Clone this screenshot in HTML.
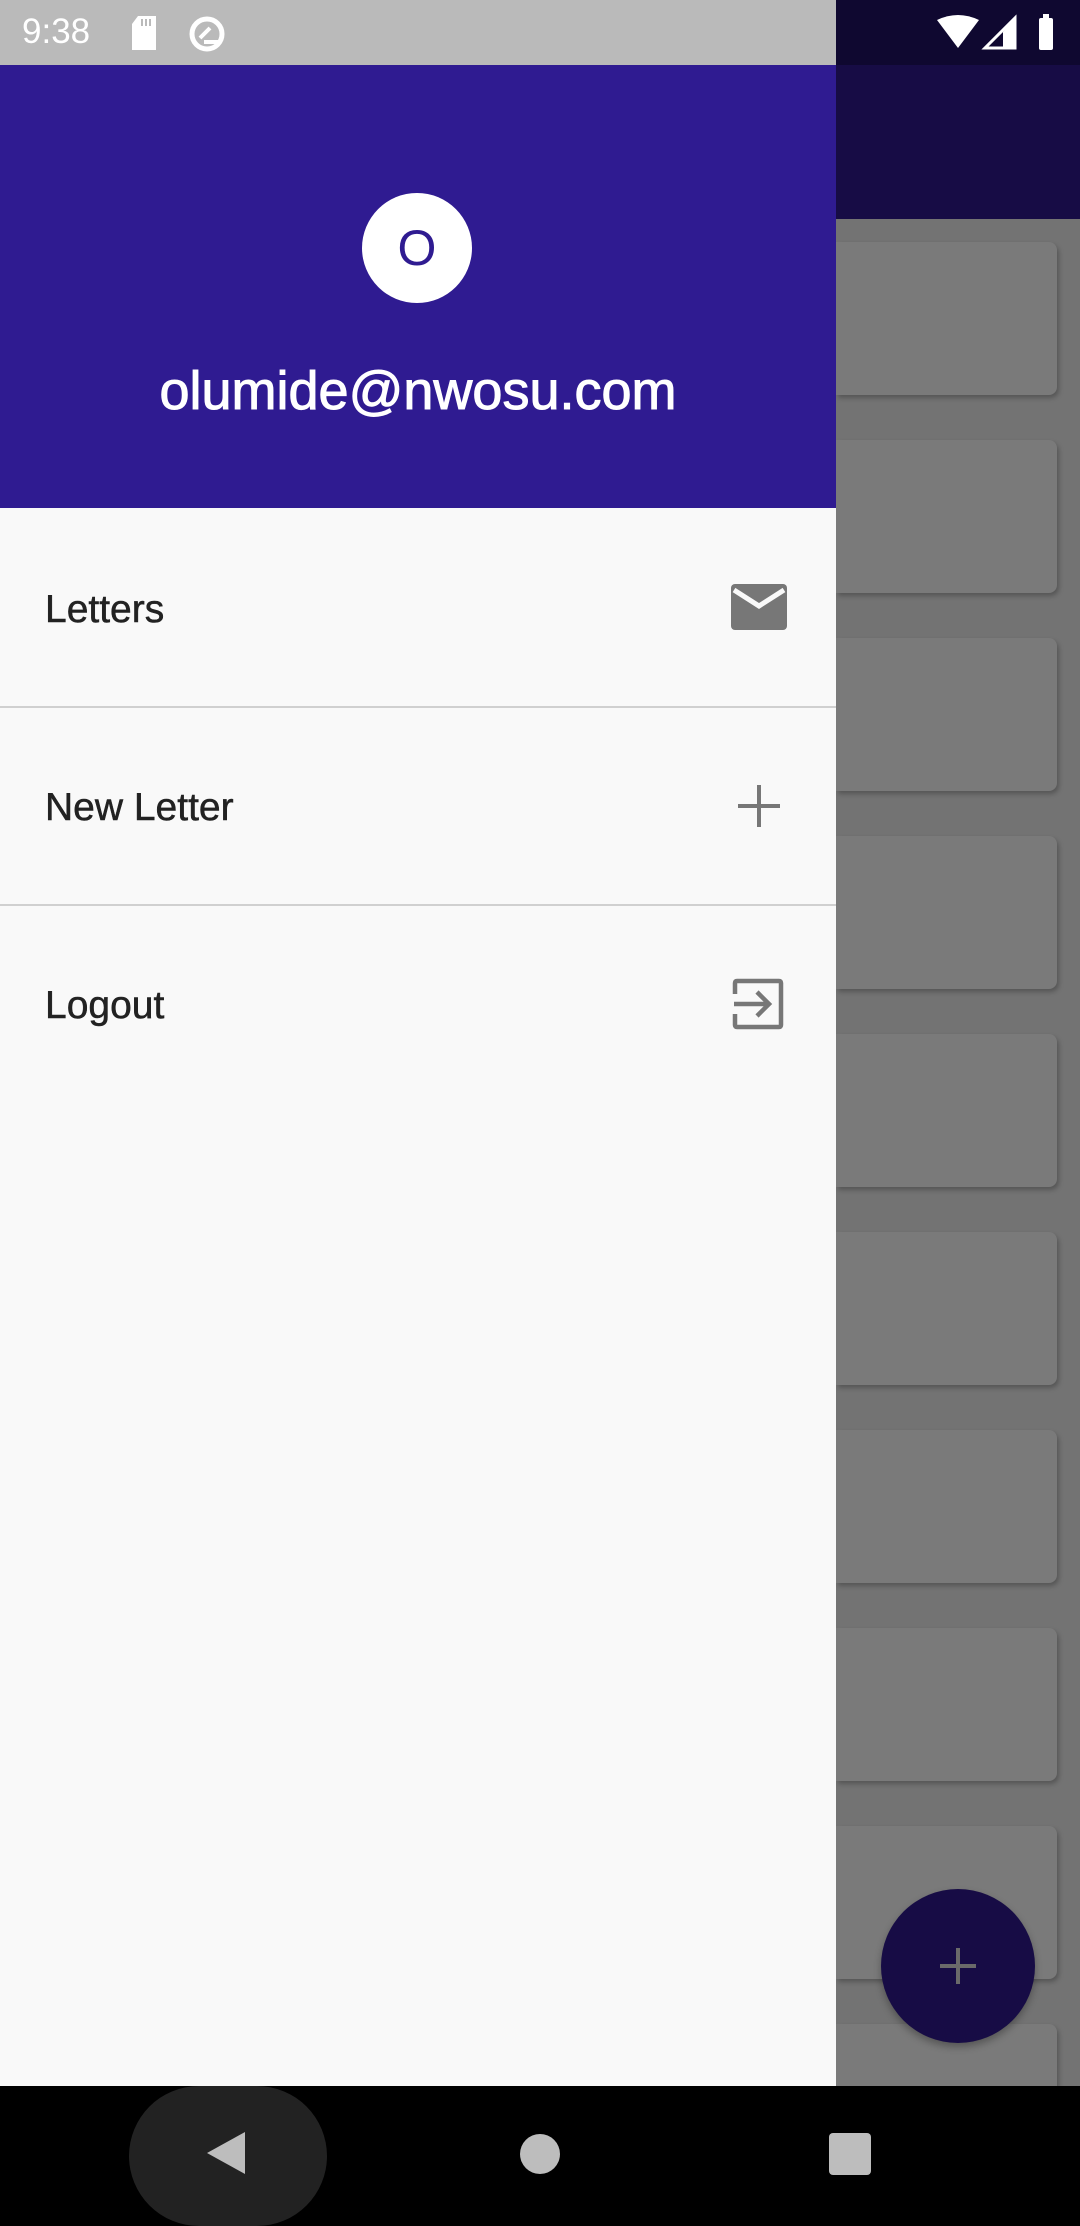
<!DOCTYPE html>
<html style="background:#000"><head><style>
*{margin:0;padding:0;box-sizing:border-box}
body{width:1080px;height:2220px;position:relative;overflow:hidden;background:#737373;font-family:"Liberation Sans",sans-serif}
.abs{position:absolute}
.card{position:absolute;left:836px;width:221px;height:153px;background:#7a7a7a;border-radius:0 8px 8px 0;box-shadow:2px 3px 5px rgba(0,0,0,.25)}
.item{position:absolute;left:45px;font-size:39px;color:#222;-webkit-text-stroke:0.5px #222}
.div{position:absolute;left:0;width:836px;height:2px;background:#d0d0d0}
</style></head><body>
<div class="abs" style="left:836px;top:0;width:244px;height:65px;background:#0f0830"></div>
<div class="abs" style="left:836px;top:65px;width:244px;height:154px;background:#170c45"></div>
<div class="card" style="top:242px"></div>
<div class="card" style="top:440px"></div>
<div class="card" style="top:638px"></div>
<div class="card" style="top:836px"></div>
<div class="card" style="top:1034px"></div>
<div class="card" style="top:1232px"></div>
<div class="card" style="top:1430px"></div>
<div class="card" style="top:1628px"></div>
<div class="card" style="top:1826px"></div>
<div class="card" style="top:2024px"></div>
<div class="abs" style="left:881px;top:1889px;width:154px;height:154px;border-radius:50%;background:#170c45;box-shadow:0 4px 8px rgba(0,0,0,.3)"></div>
<svg class="abs" style="left:938px;top:1946px" width="40" height="40"><path d="M20 2V38M2 20H38" stroke="#6a6a6a" stroke-width="4"/></svg>
<svg class="abs" style="left:935px;top:14px" width="130" height="40">
<path d="M2 6 Q23 -4 44 6 L23 34Z" fill="#fff"/>
<path d="M80 4 L80 34 L50 34Z" fill="none" stroke="#fff" stroke-width="3"/><path d="M68 18L80 4V34H68Z" fill="#fff"/>
<rect x="104" y="4" width="14" height="32" rx="2" fill="#fff"/><rect x="108" y="0" width="6" height="5" fill="#fff"/>
</svg>
<div class="abs" style="left:0;top:0;width:836px;height:2086px;background:#f9f9f9"></div>
<div class="abs" style="left:0;top:0;width:836px;height:65px;background:#bababa"></div>
<div class="abs" style="left:22px;top:12px;font-size:35px;color:#fff">9:38</div>
<svg class="abs" style="left:130px;top:16px" width="110" height="38">
<path d="M8 0H26V34H2V8Z" fill="#fff"/><path d="M12 3V10M16 3V10M20 3V10" stroke="#bababa" stroke-width="2"/>
<circle cx="77" cy="18" r="15" fill="none" stroke="#fff" stroke-width="5"/><path d="M70 22L80 12M74 26H90" stroke="#fff" stroke-width="4"/>
</svg>
<div class="abs" style="left:0;top:65px;width:836px;height:443px;background:#2f1b91"></div>
<div class="abs" style="left:362px;top:193px;width:110px;height:110px;border-radius:50%;background:#fff;text-align:center;line-height:110px;font-size:50px;color:#2f1b91">O</div>
<div class="abs" style="left:0;top:360px;width:836px;text-align:center;font-size:54px;color:#fff;-webkit-text-stroke:1px #fff">olumide@nwosu.com</div>
<div class="item" style="top:588px">Letters</div>
<svg class="abs" style="left:731px;top:584px" width="56" height="46"><rect x="0" y="0" width="56" height="46" rx="4" fill="#777"/><path d="M3 6L28 22L53 6" fill="none" stroke="#f9f9f9" stroke-width="5"/></svg>
<div class="div" style="top:706px"></div>
<div class="item" style="top:786px">New Letter</div>
<svg class="abs" style="left:738px;top:785px" width="42" height="42"><path d="M21 0V42M0 21H42" stroke="#777" stroke-width="4"/></svg>
<div class="div" style="top:904px"></div>
<div class="item" style="top:984px">Logout</div>
<svg class="abs" style="left:732px;top:978px" width="52" height="52"><path d="M3 16V5Q3 3 5 3H47Q49 3 49 5V47Q49 49 47 49H5Q3 49 3 47V36" fill="none" stroke="#777" stroke-width="4.5"/><path d="M2 26H36M25 14L37 26L25 38" fill="none" stroke="#777" stroke-width="4.5"/></svg>
<div class="abs" style="left:0;top:2086px;width:1080px;height:134px;background:#000"></div>
<div class="abs" style="left:129px;top:2086px;width:198px;height:140px;border-radius:70px;background:#222"></div>
<svg class="abs" style="left:205px;top:2130px" width="42" height="46"><path d="M40 2V44L2 23Z" fill="#bdbdbd"/></svg>
<div class="abs" style="left:520px;top:2134px;width:40px;height:40px;border-radius:50%;background:#bdbdbd"></div>
<div class="abs" style="left:829px;top:2133px;width:42px;height:42px;border-radius:4px;background:#bdbdbd"></div>
</body></html>
